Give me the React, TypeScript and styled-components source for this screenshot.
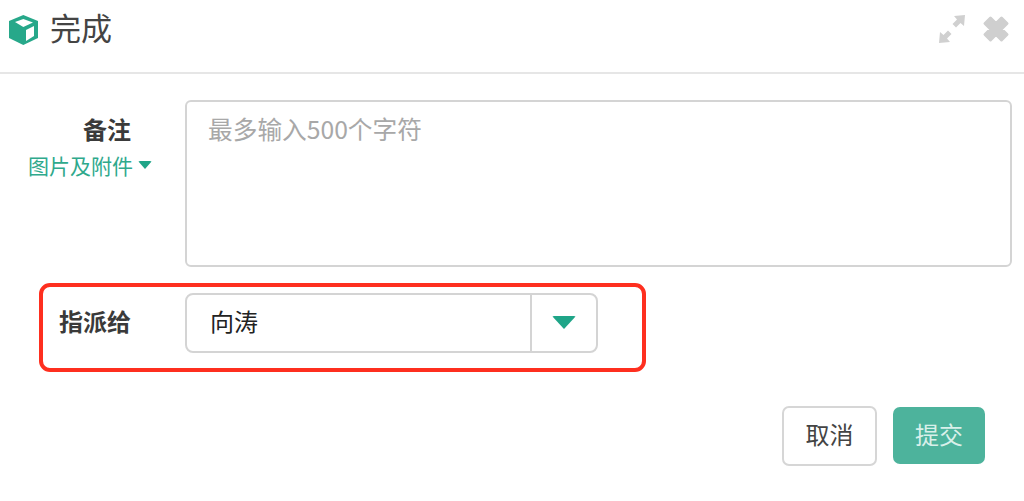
import React from "react";
import styled, { createGlobalStyle } from "styled-components";

const Global = createGlobalStyle`
  html, body { margin: 0; padding: 0; background: #fff; }
  body { font-family: "Noto Sans CJK SC", "Noto Sans", sans-serif; }
  * { box-sizing: border-box; }
`;

const Dialog = styled.div`
  width: 1024px;
  height: 501px;
  display: flex;
  flex-direction: column;
  overflow: hidden;
  background: #fff;
`;

const Header = styled.header`
  height: 74px;
  flex: none;
  display: flex;
  align-items: flex-start;
  padding: 11px 14px 0 8px;
  border-bottom: 2px solid #e6e6e6;
`;

const Title = styled.h1`
  margin: -2px 0 0 11px;
  font-size: 31px;
  font-weight: 400;
  line-height: 36px;
  color: #444;
  flex: 1;
`;

const CubeIcon = styled.svg`
  display: block;
  flex: none;
  margin-top: 4px;
`;

const ToolIcon = styled.svg`
  display: block;
  flex: none;
`;

const Tools = styled.div`
  display: flex;
  align-items: center;
  gap: 16px;
  padding-top: 4px;
`;

const Body = styled.div`
  flex: 1;
  display: flex;
  flex-direction: column;
  padding: 26px 12px 0 0;
`;

const NoteRow = styled.div`
  display: flex;
  align-items: flex-start;
`;

const LabelColumn = styled.div`
  width: 185px;
  flex: none;
  display: flex;
  flex-direction: column;
  align-items: flex-end;
  padding: 13px 54px 0 0;
`;

const Label = styled.label`
  font-size: 24px;
  font-weight: 700;
  line-height: 32px;
  color: #3a3a3a;
`;

const AttachLink = styled.a`
  display: flex;
  align-items: center;
  gap: 5px;
  margin-top: 5px;
  margin-right: -21px;
  font-size: 21px;
  line-height: 30px;
  color: #2fa98c;
`;

const Caret = styled.span<{ $w: number; $h: number }>`
  display: block;
  width: 0;
  height: 0;
  border-left: ${(p) => p.$w / 2}px solid transparent;
  border-right: ${(p) => p.$w / 2}px solid transparent;
  border-top: ${(p) => p.$h}px solid #1fa588;
  border-radius: 2px;
`;

const Note = styled.textarea`
  width: 827px;
  height: 167px;
  display: block;
  padding: 10px 21px;
  resize: none;
  outline: none;
  border: 2px solid #d4d4d4;
  border-radius: 6px;
  font-family: inherit;
  font-size: 24.7px;
  line-height: 32px;
  color: #333;
  background: #fff;
  &::placeholder { color: #a8a8a8; opacity: 1; }
`;

const AssignRow = styled.div`
  width: 607px;
  height: 89px;
  margin: 16px 0 0 39px;
  padding-bottom: 10px;
  display: flex;
  align-items: center;
  border: 4px solid #fe2f1f;
  border-radius: 11px;
`;

const AssignLabel = styled(Label)`
  width: 142px;
  flex: none;
  text-align: right;
  padding-right: 54px;
  margin-top: -4px;
  white-space: nowrap;
`;

const Select = styled.div`
  width: 413px;
  height: 60px;
  display: flex;
  align-items: stretch;
  border: 2px solid #d4d4d4;
  border-radius: 8px;
`;

const SelectValue = styled.div`
  flex: 1;
  display: flex;
  align-items: center;
  padding: 0 0 5px 23px;
  font-size: 24px;
  color: #222;
  border-right: 2px solid #d4d4d4;
`;

const SelectToggle = styled.div`
  width: 64px;
  flex: none;
  display: flex;
  align-items: center;
  justify-content: center;
`;

const Actions = styled.div`
  display: flex;
  justify-content: flex-end;
  align-items: center;
  gap: 16px;
  margin-top: 34px;
  padding-right: 27px;
`;

const CancelButton = styled.button`
  width: 95px;
  height: 60px;
  padding: 0 0 5px;
  border: 2px solid #d6d6d6;
  border-radius: 7px;
  background: #fff;
  color: #444;
  font-family: inherit;
  font-size: 24px;
`;

const SubmitButton = styled.button`
  width: 92px;
  height: 57px;
  margin-bottom: 1px;
  padding: 0 0 5px;
  border: none;
  border-radius: 7px;
  background: #4db39c;
  color: #d9f0ea;
  font-family: inherit;
  font-size: 24px;
`;

export default function App() {
  return (
    <Dialog>
      <Global />
      <Header>
        <CubeIcon width="31" height="30" viewBox="0 0 31 30">
          <path d="M15.3 0 L30 6 V23 L15.3 30 L1 23 V6 Z" fill="#27a88a" strokeLinejoin="round" />
          <path d="M7 7 L15.3 4 L25 7.5 L15.3 12 Z" fill="#fff" />
          <path d="M18 15 L26 11 V21 L18 26 Z" fill="#fff" />
        </CubeIcon>
        <Title>完成</Title>
        <Tools>
          <ToolIcon width="28" height="28" viewBox="0 0 28 28">
            <path d="M16 1 L27 0 L26 11 L22.5 8 L18 12.5 L14.5 9 L19 4.5 Z" fill="#d0d0d0" />
            <path d="M12 27 L1 28 L2 17 L5.5 20 L10 15.5 L13.5 19 L9 23.5 Z" fill="#d0d0d0" />
          </ToolIcon>
          <ToolIcon width="28" height="28" viewBox="0 0 28 28">
            <path d="M3 8.5 L8.5 3 L14 8.5 L19.5 3 L25 8.5 L19.5 14 L25 19.5 L19.5 25 L14 19.5 L8.5 25 L3 19.5 L8.5 14 Z" fill="#cfcfcf" stroke="#cfcfcf" strokeWidth="3" strokeLinejoin="round" />
          </ToolIcon>
        </Tools>
      </Header>
      <Body>
        <NoteRow>
          <LabelColumn>
            <Label>备注</Label>
            <AttachLink>
              图片及附件
              <Caret $w={14} $h={8} />
            </AttachLink>
          </LabelColumn>
          <Note placeholder="最多输入500个字符" />
        </NoteRow>
        <AssignRow>
          <AssignLabel>指派给</AssignLabel>
          <Select>
            <SelectValue>向涛</SelectValue>
            <SelectToggle>
              <Caret $w={24} $h={13} />
            </SelectToggle>
          </Select>
        </AssignRow>
        <Actions>
          <CancelButton>取消</CancelButton>
          <SubmitButton>提交</SubmitButton>
        </Actions>
      </Body>
    </Dialog>
  );
}
